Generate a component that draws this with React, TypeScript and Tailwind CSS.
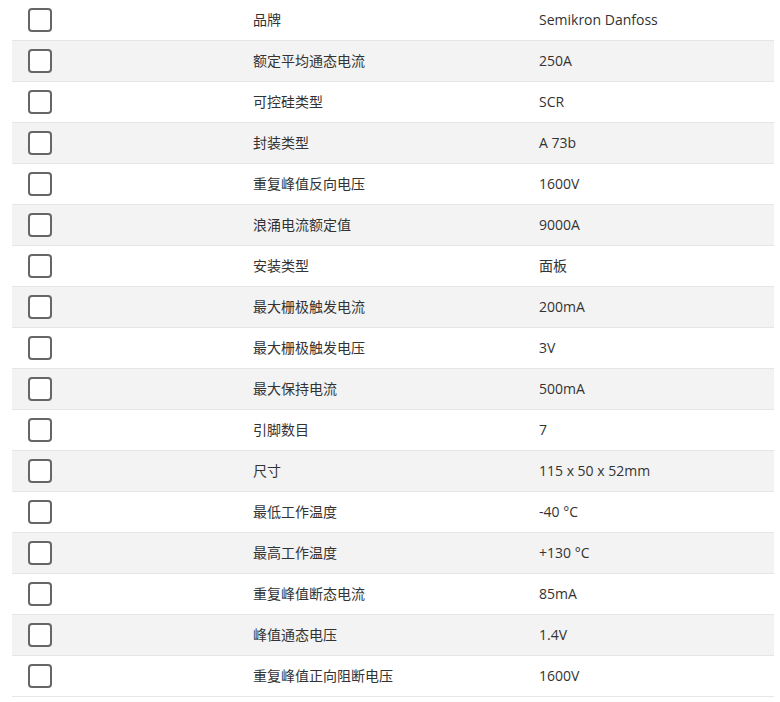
const ROWS: [string, string][] = [
  ['品牌', 'Semikron Danfoss'],
  ['额定平均通态电流', '250A'],
  ['可控硅类型', 'SCR'],
  ['封装类型', 'A 73b'],
  ['重复峰值反向电压', '1600V'],
  ['浪涌电流额定值', '9000A'],
  ['安装类型', '面板'],
  ['最大栅极触发电流', '200mA'],
  ['最大栅极触发电压', '3V'],
  ['最大保持电流', '500mA'],
  ['引脚数目', '7'],
  ['尺寸', '115 x 50 x 52mm'],
  ['最低工作温度', '-40 °C'],
  ['最高工作温度', '+130 °C'],
  ['重复峰值断态电流', '85mA'],
  ['峰值通态电压', '1.4V'],
  ['重复峰值正向阻断电压', '1600V'],
];

export default function App() {
  return (
    <div className="min-h-screen bg-white pl-3 pr-[6px] font-['Open_Sans','Noto_Sans_CJK_SC',sans-serif] text-sm text-[#333]">
      {ROWS.map(([name, value], i) => (
        <div
          key={name}
          className={`grid h-[41px] grid-cols-[229px_286px_1fr] items-center border-b border-[#e6e6e6] ${
            i % 2 === 1 ? 'bg-[#f3f3f3]' : 'bg-white'
          }`}
        >
          <div className="pl-4">
            <span className="block h-6 w-6 rounded-[4px] border-2 border-[#666] bg-white" />
          </div>
          <div className="pl-3">{name}</div>
          <div className="pl-3">{value}</div>
        </div>
      ))}
    </div>
  );
}
